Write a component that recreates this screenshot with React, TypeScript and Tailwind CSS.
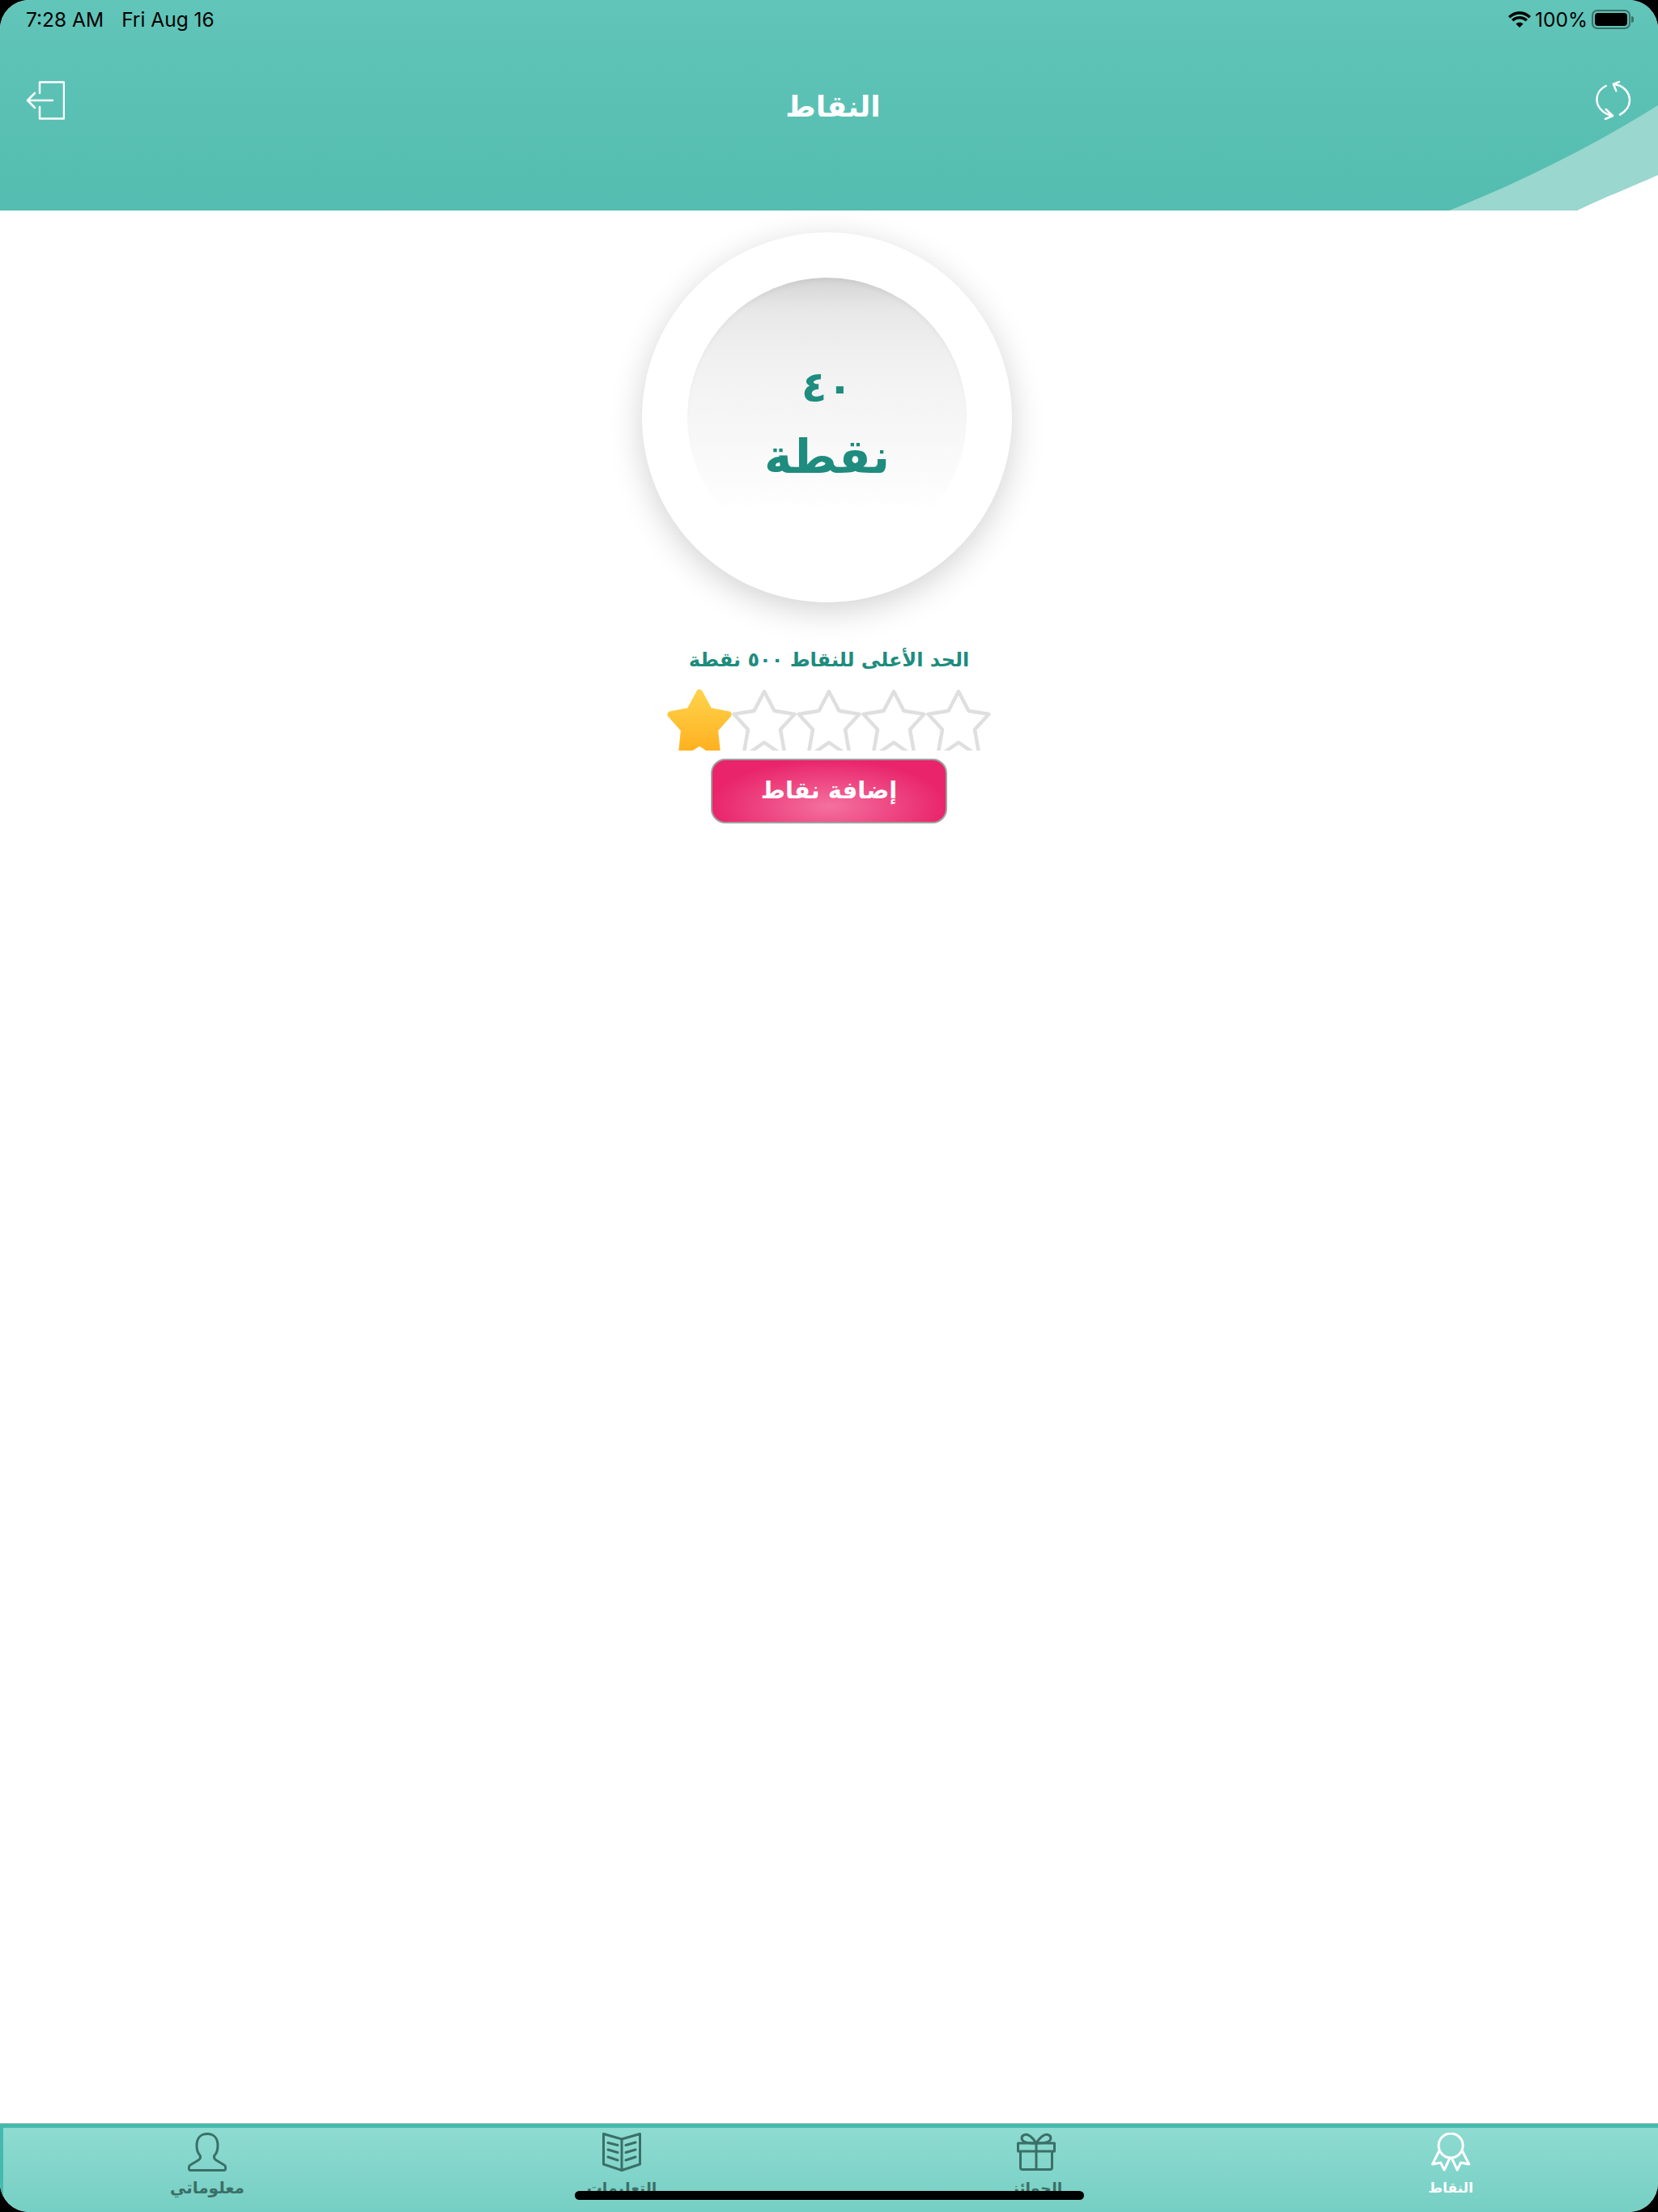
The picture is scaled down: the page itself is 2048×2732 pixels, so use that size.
import React from "react";

const arabic = "font-['DejaVu_Sans',sans-serif] font-bold";

const Star = ({ filled }: { filled?: boolean }) => (
  <svg viewBox="0 0 80 76" className="h-[76px] w-[80px] shrink-0">
    <defs>
      <linearGradient id="goldStar" x1="0" y1="0" x2="0" y2="1">
        <stop offset="0" stopColor="#ffd24a" />
        <stop offset="1" stopColor="#ffaf1e" />
      </linearGradient>
    </defs>
    {filled ? (
      <polygon
        points="40,4.5 52,27 75.5,31.5 59,50 62,80 40,66 18,80 21,50 4.5,31.5 28,27"
        fill="url(#goldStar)"
        stroke="url(#goldStar)"
        strokeWidth="8"
        strokeLinejoin="round"
      />
    ) : (
      <polygon
        points="40,3 52.5,27 77.5,31 60,50 66,84 40,66 14,84 20,50 2.5,31 27.5,27"
        fill="none"
        stroke="#dfdfdf"
        strokeWidth="4.5"
        strokeLinejoin="round"
      />
    )}
  </svg>
);

const PersonIcon = () => (
  <svg viewBox="0 0 48 48" className="h-12 w-12" fill="none" stroke="#3a6f67" strokeWidth="3" strokeLinejoin="round">
    <path d="M24 1.5 C15 1.5 11 8 11 16 C11 21 12 25 15 28 C16 30 16 32 13 34 L3 40 C1 41 0.5 46.5 3 46.5 L45 46.5 C47.5 46.5 47 41 45 40 L35 34 C32 32 32 30 33 28 C36 25 37 21 37 16 C37 8 33 1.5 24 1.5 Z" />
  </svg>
);

const BookIcon = () => (
  <svg viewBox="0 0 48 48" className="h-12 w-12" fill="none" stroke="#3a6f67" strokeWidth="3" strokeLinejoin="round" strokeLinecap="round">
    <path d="M24 8 L1.5 1.5 L1.5 39 L24 46.5 L46.5 39 L46.5 1.5 Z" />
    <path d="M24 8 L24 46.5" />
    <path d="M7 12.5 L19 15.5 M7 21 L19 24.5 M7 30 L19 34 M41 12 L29 15.5 M41 21 L29 24.5 M41 30 L29 34" />
  </svg>
);

const GiftIcon = () => (
  <svg viewBox="0 0 48 48" className="h-12 w-12" fill="none" stroke="#3a6f67" strokeWidth="3" strokeLinejoin="round">
    <path d="M24 13 C20 6 14 1.5 10 2.5 C5 3.5 5 9 9 11 C13 13 20 13 24 13 C28 6 34 1.5 38 2.5 C43 3.5 43 9 39 11 C35 13 28 13 24 13 Z" />
    <rect x="1.5" y="13" width="45" height="10" />
    <path d="M4.5 23 L4.5 43 C4.5 44.5 5.5 45.5 7 45.5 L41 45.5 C42.5 45.5 43.5 44.5 43.5 43 L43.5 23" />
    <path d="M24 13 L24 45.5" />
  </svg>
);

const RibbonIcon = () => (
  <svg viewBox="0 0 48 48" className="h-12 w-12" fill="none" stroke="#ffffff" strokeWidth="3" strokeLinejoin="round">
    <circle cx="24" cy="16" r="15" />
    <path d="M9.5 23 L1.5 39 L11.5 37 L16 46 L23 31" />
    <path d="M38.5 23 L46.5 39 L36.5 37 L32 46 L25 31" />
  </svg>
);

const tabs = [
  { label: "معلوماتي", icon: <PersonIcon />, className: "text-[20px] text-[#3a6f67]" },
  { label: "التعليمات", icon: <BookIcon />, className: "text-[19px] text-[#3a6f67]" },
  { label: "الجوائز", icon: <GiftIcon />, className: "text-[19px] text-[#3a6f67]" },
  { label: "النقاط", icon: <RibbonIcon />, className: "text-[17px] text-white" },
];

export default function App() {
  return (
    <div className="relative h-[2732px] w-[2048px] overflow-hidden bg-black">
      <div className="flex h-full flex-col overflow-hidden rounded-[36px] bg-white">
        {/* Header */}
        <header className="relative h-[260px] shrink-0 bg-gradient-to-b from-[#61c5b9] to-[#54bcb0]">
          <svg viewBox="0 0 400 130" className="absolute bottom-0 right-0 h-[130px] w-[400px]">
            <path d="M142 130 C230 95 320 50 400 0 L400 86 C370 100 330 115 300 130 Z" fill="#9ad7ce" />
            <path d="M300 130 C330 115 370 100 400 86 L400 130 Z" fill="#ffffff" />
          </svg>
          <div className="relative flex h-[48px] items-center justify-between pl-8 pr-[30px] font-['Inter',sans-serif] text-[24.5px] leading-none text-black">
            <div className="flex gap-[22px]">
              <span>7:28 AM</span>
              <span>Fri Aug 16</span>
            </div>
            <div className="flex items-center gap-[5px]">
              <svg viewBox="0 0 28 20" className="h-5 w-7">
                <path d="M14 20 L9.5 15.5 C12 13 16 13 18.5 15.5 Z M6.5 12.5 L4 10 C9.5 4.5 18.5 4.5 24 10 L21.5 12.5 C17.5 8.5 10.5 8.5 6.5 12.5 Z M2.5 8.5 L0 6 C8 -2 20 -2 28 6 L25.5 8.5 C19 2 9 2 2.5 8.5 Z" fill="#000" />
              </svg>
              <span>100%</span>
              <div className="flex items-center">
                <div className="h-6 w-[48px] rounded-[7px] border-2 border-[#3c7068] p-[2px]">
                  <div className="h-full w-full rounded-[4px] bg-black" />
                </div>
                <div className="ml-[1px] h-2 w-[3px] rounded-r-sm bg-[#3c7068]" />
              </div>
            </div>
          </div>
          <div className="relative flex items-start justify-between pl-[32px] pr-[33px] pt-[52px]">
            <svg viewBox="0 0 48 48" className="h-12 w-12" fill="none" stroke="#fff" strokeWidth="2.5" strokeLinecap="round" strokeLinejoin="round">
              <path d="M17 15 L17 1.5 L47 1.5 L47 46.5 L17 46.5 L17 32" />
              <path d="M33 24 L2 24 M11 15 L2 24 L11 33" />
            </svg>
            <h1 className={`${arabic} absolute left-0 right-0 top-[60px] pl-[10px] text-center text-[36px] leading-[48px] text-white`} dir="rtl">
              النقاط
            </h1>
            <svg viewBox="0 0 44 48" className="h-12 w-[44px]" fill="none" stroke="#fff" strokeWidth="2.5" strokeLinecap="round" strokeLinejoin="round">
              <path d="M12.7 6 C5 10 1 17 1.5 24 C2 33 10 41 21 43" />
              <path d="M30 41.7 C38 37 42 31 42 24 C42 13 33 5 22 4" />
              <path d="M29 1 L22 4 L25.3 12.3 M12.7 35 L21 43 L12 47" />
            </svg>
          </div>
        </header>

        {/* Points */}
        <main className="flex flex-1 flex-col items-center">
          <div className="mr-[5px] mt-[27px] flex h-[457px] w-[457px] items-center justify-center rounded-full bg-white shadow-[0_10px_40px_rgba(0,0,0,0.18)]">
            <div className="flex h-[345px] w-[345px] flex-col items-center rounded-full bg-[linear-gradient(180deg,#d4d4d4_0%,#e8e8e8_12%,#f1f1f1_30%,#f7f7f7_55%,#ffffff_85%)] pt-[95px] shadow-[inset_0_6px_10px_-6px_rgba(0,0,0,0.1)]">
              <span className={`${arabic} text-[52px] leading-[80px] text-[#1e8c7e]`} dir="rtl">٤٠</span>
              <span className={`${arabic} mt-[6px] text-[58px] leading-[80px] text-[#1e8c7e]`} dir="rtl">نقطة</span>
            </div>
          </div>
          <p className={`${arabic} mt-[53px] text-[24px] leading-[36px] text-[#1e8c7e]`} dir="rtl">
            الحد الأعلى للنقاط ٥٠٠ نقطة
          </p>
          <div className="mt-[18px] flex h-[76px]">
            <Star filled />
            <Star />
            <Star />
            <Star />
            <Star />
          </div>
          <button className={`${arabic} mt-[10px] h-[80px] w-[292px] rounded-[18px] border-2 border-[#a0a0a0] bg-[radial-gradient(ellipse_at_50%_75%,#f4719f,#e9246a_72%)] text-[29px] text-white`} dir="rtl">
            إضافة نقاط
          </button>
        </main>

        {/* Tab bar */}
        <nav className="relative grid h-[109px] shrink-0 grid-cols-4 border-t-[5px] border-[#45b9ad] bg-gradient-to-b from-[#8edbd1] to-[#76cfc4] shadow-[inset_4px_0_0_#45b9ad,0_-1px_0_#c0c0c0]">
          {tabs.map((tab) => (
            <div key={tab.label} className="flex flex-col items-center pt-[6px]">
              {tab.icon}
              <span className={`${arabic} mt-[8px] leading-[24px] ${tab.className}`} dir="rtl">{tab.label}</span>
            </div>
          ))}
        </nav>
      </div>

      {/* Home indicator */}
      <div className="absolute bottom-[15px] left-[710px] h-[11px] w-[629px] rounded-full bg-black" />
    </div>
  );
}
